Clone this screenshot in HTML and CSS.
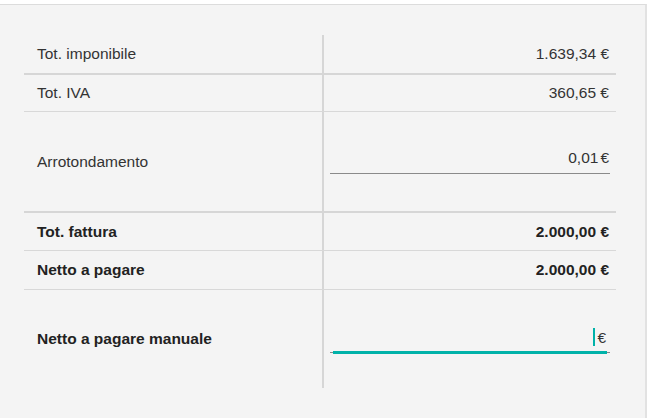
FILE: index.html
```html
<!DOCTYPE html>
<html lang="it">
<head>
<meta charset="utf-8">
<link rel="stylesheet" href="styles.css">
</head>
<body>
<div class="panel">
  <div class="totals">
    <div class="row r1 thick">
      <div class="label">Tot. imponibile</div>
      <div class="value">1.639,34 €</div>
    </div>
    <div class="row r2">
      <div class="label">Tot. IVA</div>
      <div class="value">360,65 €</div>
    </div>
    <div class="row r3 thick">
      <div class="label">Arrotondamento</div>
      <div class="value">
        <div class="field"><span class="num">0,01</span><span class="cur">€</span></div>
      </div>
    </div>
    <div class="row r4 bold">
      <div class="label">Tot. fattura</div>
      <div class="value">2.000,00 €</div>
    </div>
    <div class="row r5 bold">
      <div class="label">Netto a pagare</div>
      <div class="value">2.000,00 €</div>
    </div>
    <div class="row r6 bold last">
      <div class="label">Netto a pagare manuale</div>
      <div class="value">
        <div class="field active"><span class="caret"></span><span class="cur">€</span></div>
      </div>
    </div>
  </div>
</div>
</body>
</html>
```
FILE: styles.css
```css
html, body {
  margin: 0;
  padding: 0;
  background: #ffffff;
}
body {
  font-family: "Liberation Sans", Arial, sans-serif;
  font-size: 15.5px;
  color: #333333;
}
.panel {
  margin-top: 4px;
  width: 647px;
  height: 414px;
  box-sizing: border-box;
  background: #f4f4f4;
  border-top: 1px solid #dcdcdc;
  border-right: 2px solid #e2e2e2;
  padding: 30px 0 0 24px;
}
.totals {
  width: 592px;
  display: flex;
  flex-direction: column;
}
.row {
  display: flex;
  border-bottom: 1px solid #d8d8d8;
}
.row.thick {
  border-bottom: 2px solid #d6d6d6;
}
.row.last {
  border-bottom: none;
}
.r1 { height: 38px; }
.r2 { height: 36px; }
.r3 { height: 99px; }
.r4 { height: 37px; }
.r5 { height: 38px; }
.r6 { height: 98px; }
.label {
  flex: none;
  width: 300px;
  box-sizing: border-box;
  border-right: 2px solid #d6d6d6;
  padding-left: 13px;
  display: flex;
  align-items: center;
}
.value {
  flex: 1;
  display: flex;
  align-items: center;
  justify-content: flex-end;
  padding-right: 7px;
  padding-left: 6px;
}
.bold {
  font-weight: bold;
  color: #222222;
}
.field {
  position: relative;
  flex: 1;
  height: 28px;
  margin-bottom: 11px;
  margin-right: -1px;
  border-bottom: 1px solid #8a8a8a;
  display: flex;
  align-items: flex-end;
  justify-content: flex-end;
  padding-bottom: 6px;
  box-sizing: content-box;
  font-weight: normal;
  color: #333333;
}
.field .num {
  margin-right: 2px;
}
.field .cur {
  padding-right: 1px;
}
.field.active {
  height: 24px;
  margin-bottom: 2px;
  padding-bottom: 5px;
  padding-right: 3px;
}
.field.active::after {
  content: "";
  position: absolute;
  left: 3px;
  right: 3px;
  bottom: -2px;
  height: 3px;
  background: #00b2a9;
}
.caret {
  width: 2px;
  height: 18px;
  background: #00b2a9;
  margin-right: 2px;
  align-self: flex-end;
  margin-bottom: 1px;
}
```
